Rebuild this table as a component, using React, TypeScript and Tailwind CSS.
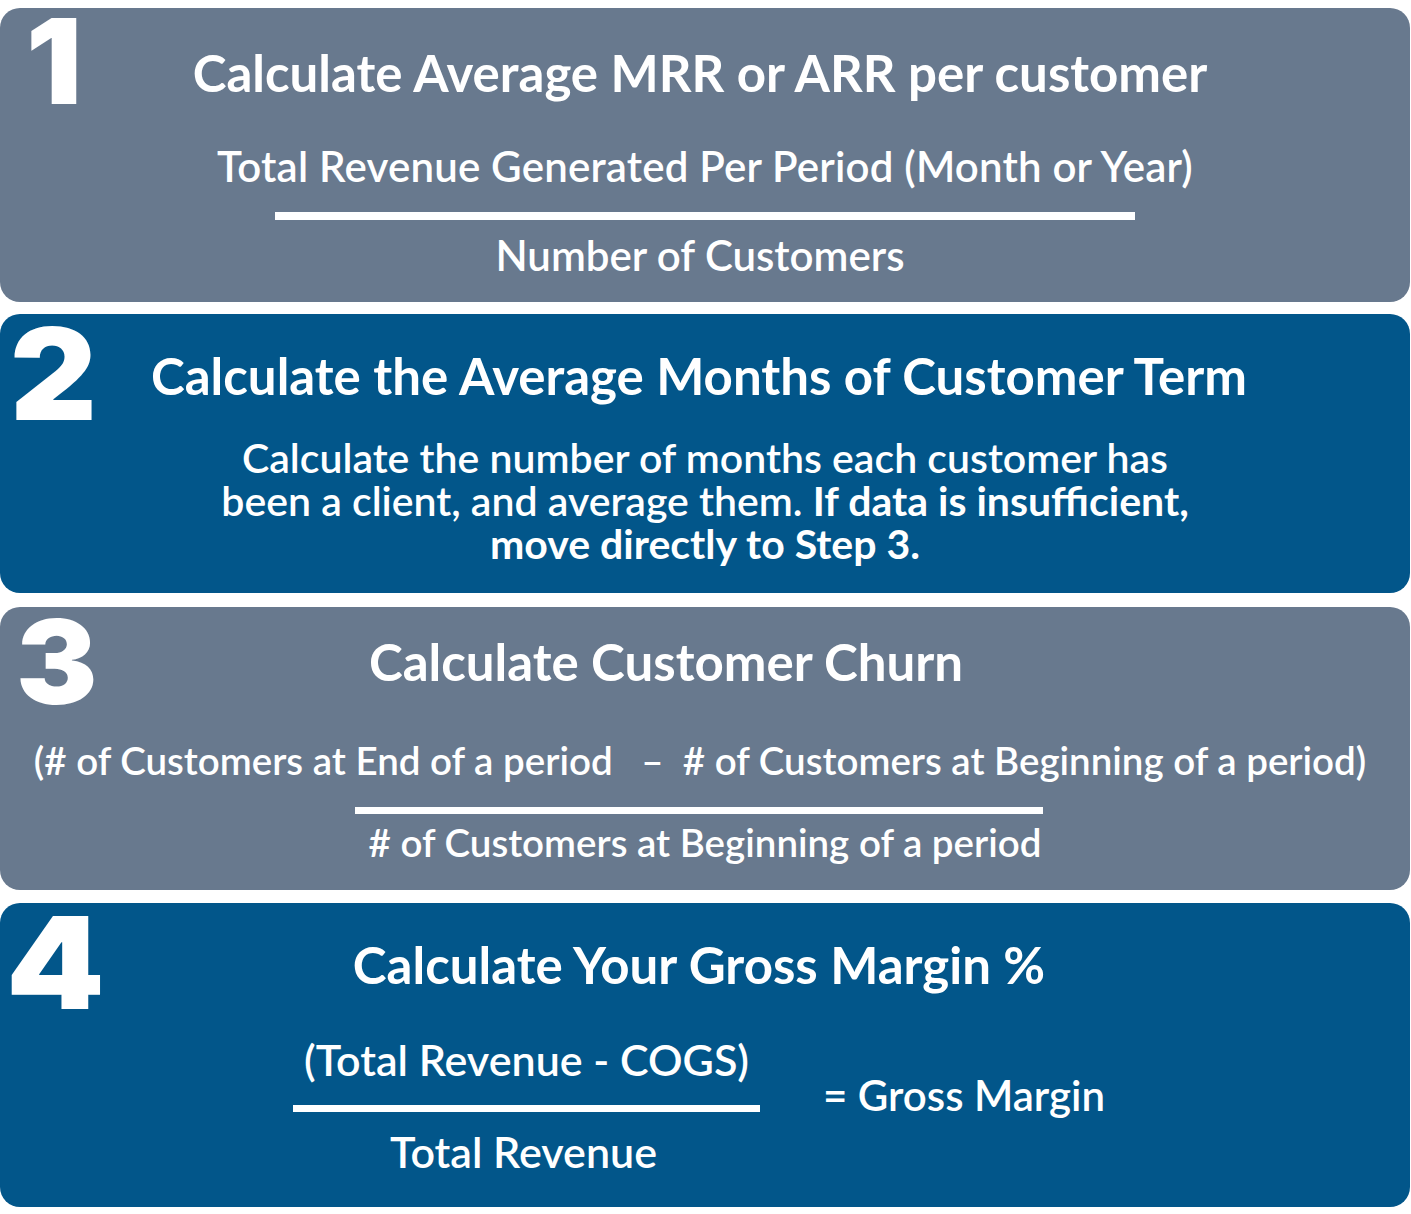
import React from "react";

const lato = { fontFamily: "Lato, 'Noto Sans', sans-serif" };
const digitFont = { fontFamily: "Inter, 'DejaVu Sans', sans-serif" };

const Digit = ({ n, className }: { n: string; className: string }) => (
  <span
    style={digitFont}
    className={`absolute font-black text-white leading-[1.1] origin-top-left ${className}`}
  >
    {n}
  </span>
);

export default function App() {
  return (
    <div style={lato} className="bg-white w-[1411px] pt-2 pb-[7px] flex flex-col text-white">
      {/* step 1 */}
      <div className="relative h-[294px] w-[1410px] rounded-[20px] bg-[#68798e] flex flex-col items-center">
        <Digit n="1" className="left-[26px] top-[-11px] text-[118px] scale-x-105" />
        <h2 className="mt-[36px] text-[51px] font-bold leading-[58px] ml-[-10px]">
          Calculate Average MRR or ARR per customer
        </h2>
        <p className="mt-[39px] text-[42px] font-semibold leading-[50px] tracking-[0.2px]">
          Total Revenue Generated Per Period (Month or Year)
        </p>
        <div className="mt-[21px] h-[8px] w-[860px] bg-white" />
        <p className="mt-[10px] text-[42px] font-semibold leading-[50px] ml-[-10px]">
          Number of Customers
        </p>
      </div>

      {/* step 2 */}
      <div className="relative mt-3 h-[279px] w-[1410px] rounded-[20px] bg-[#02568a] flex flex-col items-center">
        <Digit n="2" className="left-[10px] top-[-10px] text-[128px] scale-x-105" />
        <h2 className="mt-[33px] text-[51px] font-bold leading-[58px] ml-[-12px]">
          Calculate the Average Months of Customer Term
        </h2>
        <p className="mt-[31px] text-[41px] font-semibold leading-[43px] text-center">
          Calculate the number of months each customer has
          <br />
          been a client, and average them.{" "}
          <span className="font-bold">If data is insufficient,</span>
          <br />
          <span className="font-bold">move directly to Step 3.</span>
        </p>
      </div>

      {/* step 3 */}
      <div className="relative mt-[14px] h-[283px] w-[1410px] rounded-[20px] bg-[#68798e] flex flex-col items-center">
        <Digit n="3" className="left-[16px] top-[-8px] text-[116px] scale-x-105" />
        <h2 className="mt-[26px] text-[51px] font-bold leading-[58px] mr-[78px]">
          Calculate Customer Churn
        </h2>
        <p className="mt-[46px] text-[38.5px] font-semibold leading-[46px] whitespace-pre ml-[-10px]">
          (# of Customers at End of a period   –  # of Customers at Beginning of a period)
        </p>
        <div className="mt-[24px] h-[7px] w-[688px] bg-white mr-[13px]" />
        <p className="mt-[5px] text-[38.5px] font-semibold leading-[46px]">
          # of Customers at Beginning of a period
        </p>
      </div>

      {/* step 4 */}
      <div className="relative mt-[13px] h-[304px] w-[1410px] rounded-[20px] bg-[#02568a] flex flex-col items-center">
        <Digit n="4" className="left-[6px] top-[-10px] text-[128px] scale-x-110" />
        <h2 className="mt-[33px] text-[51px] font-bold leading-[58px] ml-[-12px]">
          Calculate Your Gross Margin %
        </h2>
        <div className="mt-[42px] flex items-start w-full">
          <div className="ml-[293px] w-[467px] flex flex-col items-center">
            <p className="text-[43px] font-semibold leading-[48px]">(Total Revenue - COGS)</p>
            <div className="mt-[21px] h-[7px] w-full bg-white" />
            <p className="mt-[16px] text-[43px] font-semibold leading-[48px] ml-[-6px]">
              Total Revenue
            </p>
          </div>
          <p className="ml-[63px] mt-[35px] text-[42px] font-semibold leading-[48px]">
            = Gross Margin
          </p>
        </div>
      </div>
    </div>
  );
}
